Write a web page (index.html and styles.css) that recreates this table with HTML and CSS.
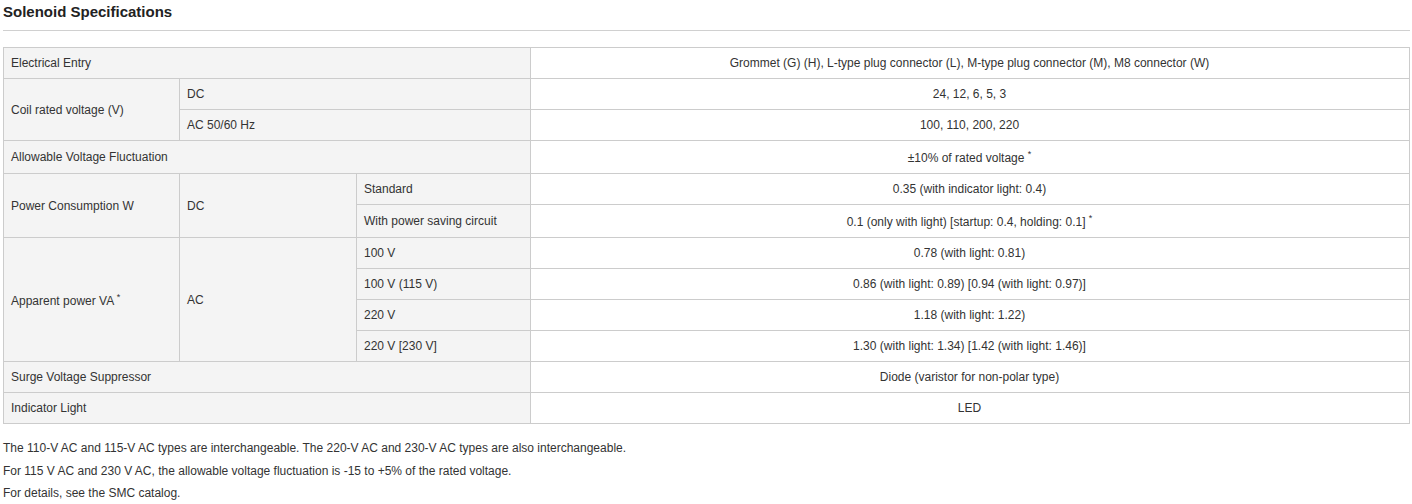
FILE: index.html
```html
<!DOCTYPE html>
<html lang="en">
<head>
<meta charset="utf-8">
<title>Solenoid Specifications</title>
<link rel="stylesheet" href="styles.css">
</head>
<body>
<div class="page">
  <h3 class="title">Solenoid Specifications</h3>
  <div class="rule"></div>
  <table class="spec">
    <colgroup>
      <col class="c1"><col class="c2"><col class="c3"><col class="c4">
    </colgroup>
    <tbody>
      <tr><th colspan="3">Electrical Entry</th><td>Grommet (G) (H), L-type plug connector (L), M-type plug connector (M), M8 connector (W)</td></tr>
      <tr><th rowspan="2">Coil rated voltage (V)</th><th colspan="2">DC</th><td>24, 12, 6, 5, 3</td></tr>
      <tr><th colspan="2">AC 50/60 Hz</th><td>100, 110, 200, 220</td></tr>
      <tr><th colspan="3">Allowable Voltage Fluctuation</th><td>±10% of rated voltage <sup>*</sup></td></tr>
      <tr><th rowspan="2">Power Consumption W</th><th rowspan="2">DC</th><th>Standard</th><td>0.35 (with indicator light: 0.4)</td></tr>
      <tr><th>With power saving circuit</th><td>0.1 (only with light) [startup: 0.4, holding: 0.1] <sup>*</sup></td></tr>
      <tr><th rowspan="4">Apparent power VA <sup>*</sup></th><th rowspan="4">AC</th><th>100 V</th><td>0.78 (with light: 0.81)</td></tr>
      <tr><th>100 V (115 V)</th><td>0.86 (with light: 0.89) [0.94 (with light: 0.97)]</td></tr>
      <tr><th>220 V</th><td>1.18 (with light: 1.22)</td></tr>
      <tr><th>220 V [230 V]</th><td>1.30 (with light: 1.34) [1.42 (with light: 1.46)]</td></tr>
      <tr><th colspan="3">Surge Voltage Suppressor</th><td>Diode (varistor for non-polar type)</td></tr>
      <tr><th colspan="3">Indicator Light</th><td>LED</td></tr>
    </tbody>
  </table>
  <div class="notes">
    <p>The 110-V AC and 115-V AC types are interchangeable. The 220-V AC and 230-V AC types are also interchangeable.</p>
    <p>For 115 V AC and 230 V AC, the allowable voltage fluctuation is -15 to +5% of the rated voltage.</p>
    <p>For details, see the SMC catalog.</p>
  </div>
</div>
</body>
</html>
```

FILE: styles.css
```css
html, body {
  margin: 0;
  padding: 0;
  background: #fff;
}
body {
  font-family: "Liberation Sans", Arial, sans-serif;
  color: #333;
}
.page {
  padding: 3px 2px 0 3px;
}
.title {
  margin: 0;
  font-size: 15px;
  line-height: 18px;
  font-weight: bold;
  color: #222;
}
.rule {
  height: 1px;
  background: #d0d0d0;
  margin-top: 9px;
}
.spec {
  width: 100%;
  margin-top: 16px;
  border-collapse: collapse;
  table-layout: fixed;
  font-size: 12px;
}
.c1 { width: 176px; }
.c2 { width: 177px; }
.c3 { width: 174px; }
.spec th, .spec td {
  border: 1px solid #cccccc;
  padding: 8px 8px 8px 7px;
  font-weight: normal;
  vertical-align: middle;
}
.spec th {
  background: #f4f4f4;
  text-align: left;
}
.spec td {
  background: #fff;
  text-align: center;
}
.spec sup {
  font-size: 9px;
}
.notes {
  margin-top: 13px;
  font-size: 12px;
}
.notes p {
  margin: 0;
  line-height: 22.5px;
}
```
